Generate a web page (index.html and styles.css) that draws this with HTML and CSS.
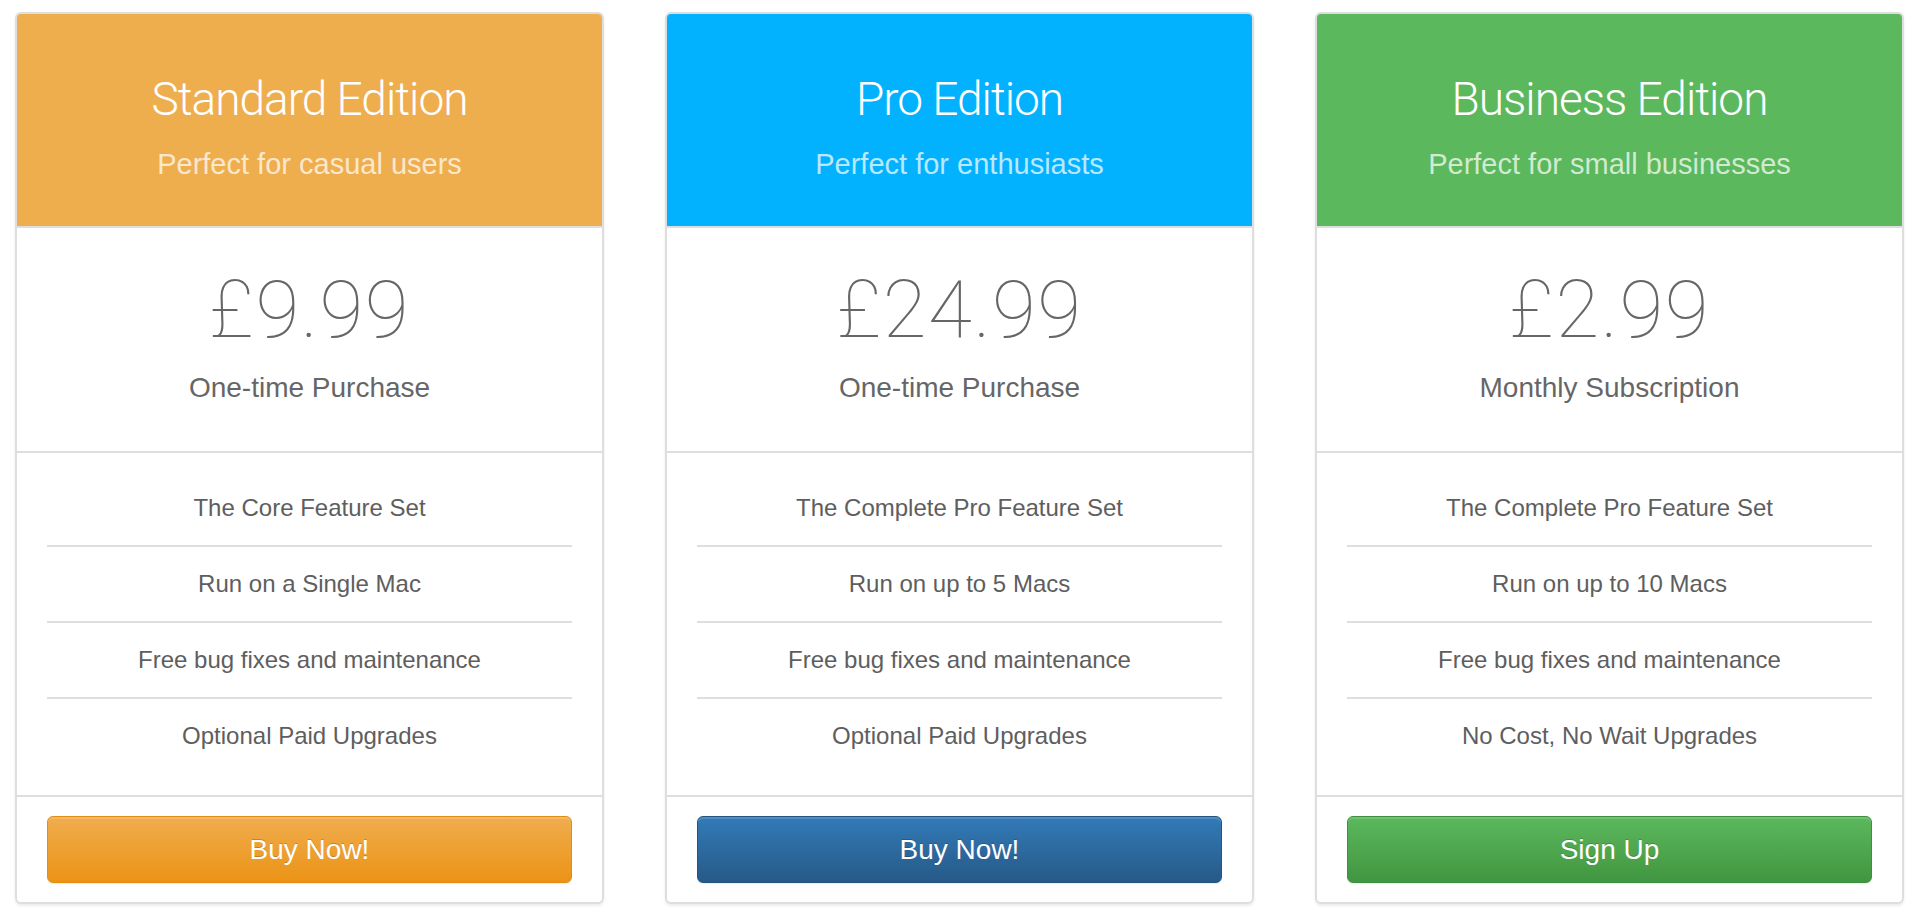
FILE: index.html
```html
<!DOCTYPE html>
<html lang="en">
<head>
<meta charset="utf-8">
<title>Pricing</title>
<link rel="stylesheet" href="styles.css">
</head>
<body>
<main class="plans">
  <section class="plan plan-standard">
    <header class="plan-head">
      <h2 class="plan-title">Standard Edition</h2>
      <p class="plan-tagline">Perfect for casual users</p>
    </header>
    <div class="plan-price">
      <div class="price">£9.99</div>
      <div class="price-term">One-time Purchase</div>
    </div>
    <ul class="features">
      <li>The Core Feature Set</li>
      <li>Run on a Single Mac</li>
      <li>Free bug fixes and maintenance</li>
      <li>Optional Paid Upgrades</li>
    </ul>
    <div class="plan-foot">
      <a class="btn btn-warning" href="#">Buy Now!</a>
    </div>
  </section>

  <section class="plan plan-pro">
    <header class="plan-head">
      <h2 class="plan-title">Pro Edition</h2>
      <p class="plan-tagline">Perfect for enthusiasts</p>
    </header>
    <div class="plan-price">
      <div class="price">£24.99</div>
      <div class="price-term">One-time Purchase</div>
    </div>
    <ul class="features">
      <li>The Complete Pro Feature Set</li>
      <li>Run on up to 5 Macs</li>
      <li>Free bug fixes and maintenance</li>
      <li>Optional Paid Upgrades</li>
    </ul>
    <div class="plan-foot">
      <a class="btn btn-primary" href="#">Buy Now!</a>
    </div>
  </section>

  <section class="plan plan-business">
    <header class="plan-head">
      <h2 class="plan-title">Business Edition</h2>
      <p class="plan-tagline">Perfect for small businesses</p>
    </header>
    <div class="plan-price">
      <div class="price">£2.99</div>
      <div class="price-term">Monthly Subscription</div>
    </div>
    <ul class="features">
      <li>The Complete Pro Feature Set</li>
      <li>Run on up to 10 Macs</li>
      <li>Free bug fixes and maintenance</li>
      <li>No Cost, No Wait Upgrades</li>
    </ul>
    <div class="plan-foot">
      <a class="btn btn-success" href="#">Sign Up</a>
    </div>
  </section>
</main>
</body>
</html>
```

FILE: styles.css
```css
* {
  box-sizing: border-box;
}

html, body {
  margin: 0;
  padding: 0;
  background: #ffffff;
}

body {
  font-family: "Liberation Sans", Arial, sans-serif;
  color: #666666;
}

.plans {
  display: flex;
  gap: 61px;
  padding: 12px 15px;
}

.plan {
  flex: 0 0 589px;
  display: flex;
  flex-direction: column;
  border: 2px solid #dedede;
  border-radius: 6px;
  overflow: hidden;
  background: #ffffff;
  box-shadow: 0 2px 3px rgba(0, 0, 0, 0.08);
  text-align: center;
}

.plan-head {
  height: 214px;
  padding-top: 58px;
  border-bottom: 2px solid #dedede;
  color: #ffffff;
}

.plan-standard .plan-head { background: #efae4e; }
.plan-pro .plan-head { background: #03b2ff; }
.plan-business .plan-head { background: #5cb85c; }

.plan-title {
  margin: 0;
  font-family: Roboto, "Liberation Sans", sans-serif;
  font-weight: 300;
  font-size: 46px;
  line-height: 54px;
  letter-spacing: -1px;
}

.plan-tagline {
  margin: 21px 0 0;
  font-size: 29px;
  line-height: 34px;
  color: rgba(255, 255, 255, 0.72);
}

.plan-price {
  height: 225px;
  padding-top: 37px;
  border-bottom: 2px solid #dedede;
}

.price {
  font-family: Roboto, "Liberation Sans", sans-serif;
  font-weight: 100;
  font-size: 80px;
  line-height: 90px;
  letter-spacing: 1.5px;
  color: #666666;
}

.price-term {
  margin-top: 16px;
  font-size: 28px;
  line-height: 34px;
  color: #666666;
}

.features {
  list-style: none;
  margin: 0;
  padding: 18px 30px 22px;
  border-bottom: 2px solid #dedede;
}

.features li {
  padding: 20px 0 20px;
  font-size: 24px;
  line-height: 34px;
  color: #5e5e5e;
}

.features li + li {
  border-top: 2px solid #dedede;
}

.plan-foot {
  padding: 19px 30px;
}

.btn {
  display: block;
  height: 67px;
  padding: 15px 0;
  border: 1px solid transparent;
  border-radius: 6px;
  font-size: 28px;
  line-height: 35px;
  color: #ffffff;
  text-decoration: none;
  text-shadow: 0 -1px 0 rgba(0, 0, 0, 0.2);
  box-shadow: inset 0 2px 0 rgba(255, 255, 255, 0.15), 0 1px 1px rgba(0, 0, 0, 0.075);
}

.btn-warning {
  background: linear-gradient(to bottom, #f0ad4e 0%, #eb9316 100%);
  border-color: #e38d13;
}

.btn-primary {
  background: linear-gradient(to bottom, #337ab7 0%, #265a88 100%);
  border-color: #245580;
}

.btn-success {
  background: linear-gradient(to bottom, #5cb85c 0%, #419641 100%);
  border-color: #3e8f3e;
}
```
